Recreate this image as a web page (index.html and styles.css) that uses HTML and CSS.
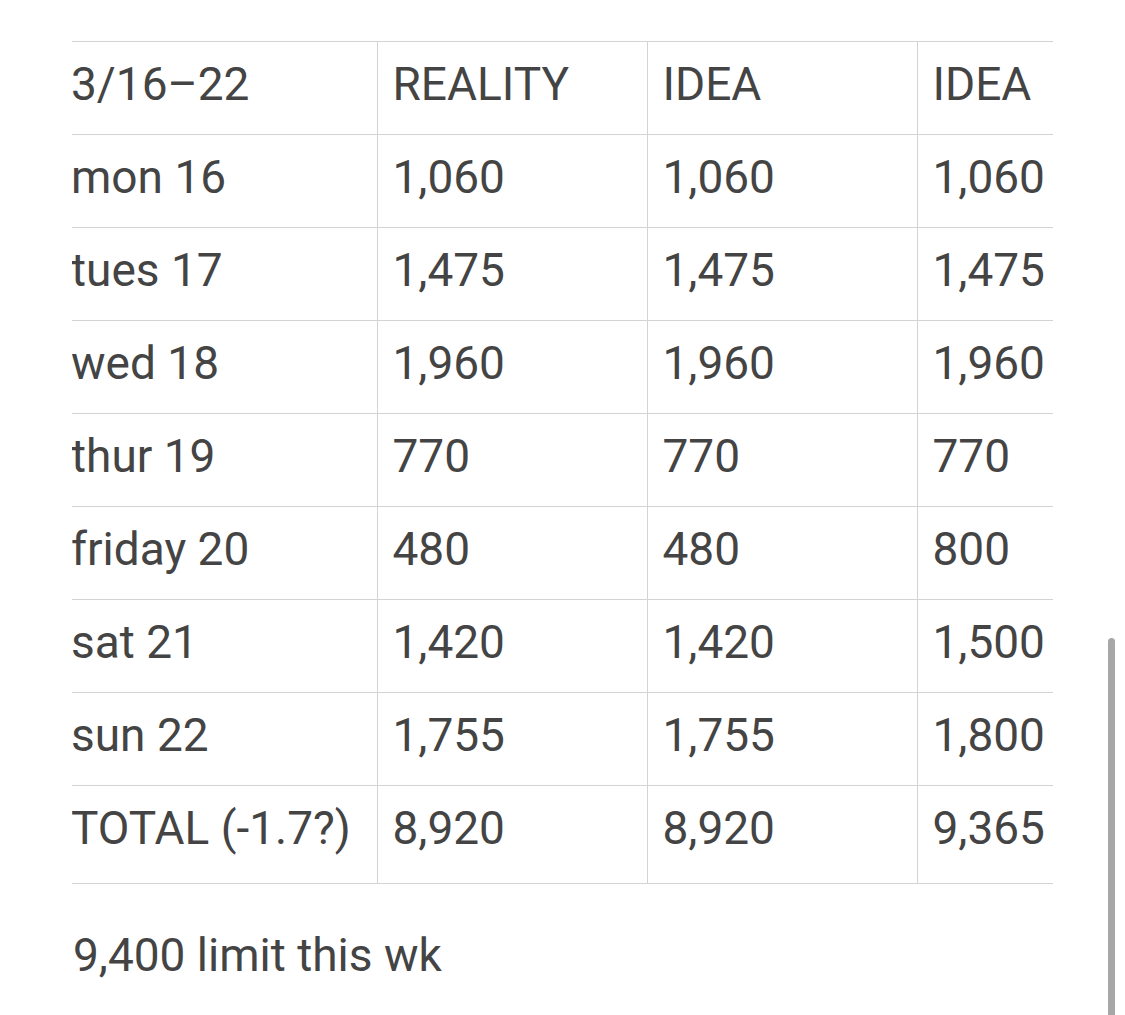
FILE: index.html
```html
<!DOCTYPE html>
<html lang="en">
<head>
<meta charset="utf-8">
<title>Week 3/16–22</title>
<link rel="stylesheet" href="styles.css">
</head>
<body>
<main class="page">
  <div class="scroller">
    <table class="grid">
      <colgroup>
        <col class="c-day">
        <col class="c-val">
        <col class="c-val">
        <col class="c-val">
      </colgroup>
      <tbody>
        <tr><td>3/16–22</td><td>REALITY</td><td>IDEA</td><td>IDEA</td></tr>
        <tr><td>mon 16</td><td>1,060</td><td>1,060</td><td>1,060</td></tr>
        <tr><td>tues 17</td><td>1,475</td><td>1,475</td><td>1,475</td></tr>
        <tr><td>wed 18</td><td>1,960</td><td>1,960</td><td>1,960</td></tr>
        <tr><td>thur 19</td><td>770</td><td>770</td><td>770</td></tr>
        <tr><td>friday 20</td><td>480</td><td>480</td><td>800</td></tr>
        <tr><td>sat 21</td><td>1,420</td><td>1,420</td><td>1,500</td></tr>
        <tr><td>sun 22</td><td>1,755</td><td>1,755</td><td>1,800</td></tr>
        <tr class="total"><td>TOTAL (-1.7?)</td><td>8,920</td><td>8,920</td><td>9,365</td></tr>
      </tbody>
    </table>
  </div>
  <p class="note">9,400 limit this wk</p>
</main>
<div class="scrollbar"></div>
</body>
</html>
```

FILE: styles.css
```css
html, body {
  margin: 0;
  padding: 0;
  background: #ffffff;
}

body {
  font-family: Roboto, "Liberation Sans", Arial, sans-serif;
  color: #444444;
  width: 1125px;
  height: 1015px;
  overflow: hidden;
  position: relative;
}

.page {
  padding: 41px 0 0 72px;
}

.scroller {
  width: 981px;
  overflow: hidden;
}

.grid {
  border-collapse: collapse;
  table-layout: fixed;
  width: 1117px;
  margin-left: -2px;
  font-size: 46px;
  font-weight: 400;
}

.c-day { width: 307px; }
.c-val { width: 270px; }

.grid tr {
  border-top: 1px solid #d3d3d3;
  border-bottom: 1px solid #d3d3d3;
}

.grid td {
  padding: 0 0 7px 15px;
  line-height: 85px;
  height: 85px;
  vertical-align: middle;
  white-space: nowrap;
  border-left: 1px solid #d3d3d3;
}

.grid td:first-child {
  padding-left: 1px;
  border-left: none;
}

.grid tr.total td {
  padding-bottom: 12px;
}

.note {
  margin: 44px 0 0 0;
  font-size: 46px;
  line-height: 54px;
  padding-left: 1px;
}

.scrollbar {
  position: absolute;
  left: 1108px;
  top: 638px;
  width: 7px;
  height: 400px;
  border-radius: 4px;
  background: #a7a7a7;
}
```
